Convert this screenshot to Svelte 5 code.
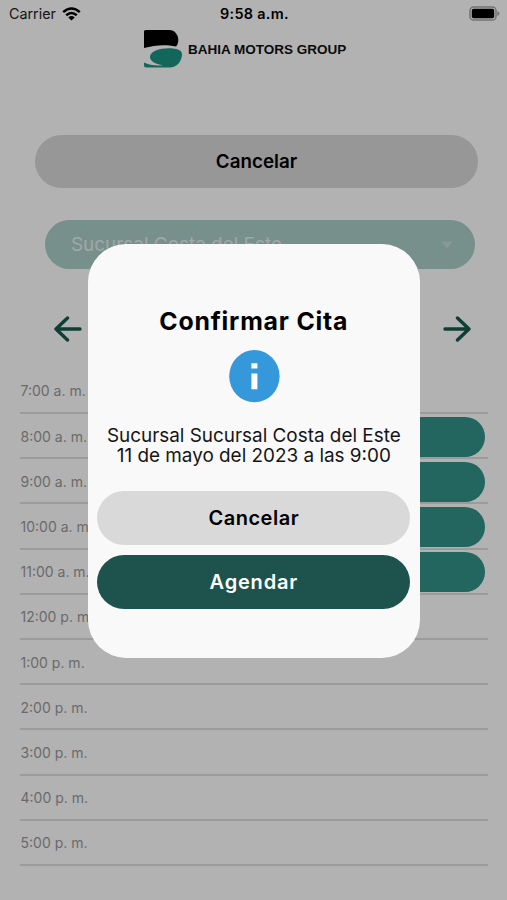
<script>
    let showModal = true;
    let branch = "Sucursal Costa del Este";

    const hours = [
        { label: "7:00 a. m.", free: false },
        { label: "8:00 a. m.", free: true },
        { label: "9:00 a. m.", free: true },
        { label: "10:00 a. m.", free: true },
        { label: "11:00 a. m.", free: true },
        { label: "12:00 p. m.", free: false },
        { label: "1:00 p. m.", free: false },
        { label: "2:00 p. m.", free: false },
        { label: "3:00 p. m.", free: false },
        { label: "4:00 p. m.", free: false },
        { label: "5:00 p. m.", free: false },
    ];
</script>

<div class="screen">
    <div class="status">
        <div class="carrier">
            <span>Carrier</span>
            <svg width="19" height="14" viewBox="0 0 19 14">
                <g fill="none" stroke="#000" stroke-width="2.5">
                    <path d="M1.2 5.1Q9.5-2.2 17.8 5.1" />
                    <path d="M4.2 8.3Q9.5 3.8 14.8 8.3" />
                </g>
                <path d="M6.3 10.4Q9.5 7.8 12.7 10.4L9.5 13.6Z" />
            </svg>
        </div>
        <span class="clock">9:58 a.m.</span>
        <svg class="battery" width="31" height="15" viewBox="0 0 31 15">
            <rect x="1" y="1" width="26" height="13" rx="3.6" fill="none" stroke="#a6a6a6" stroke-width="1.5" />
            <rect x="2.8" y="2.8" width="22.4" height="9.4" rx="1.8" />
            <path d="M28.3 5Q30.4 5.8 30.4 7.5T28.3 10Z" fill="#a6a6a6" />
        </svg>
    </div>

    <header>
        <svg width="38" height="38" viewBox="0 0 38 38">
            <path d="M1.5 0H25C31 0 34.3 5 34.3 10C34.3 13 33.5 15 32 16.5C20 14 10 15.5 0 18V1.5Q0 0 1.5 0Z" />
            <path
                fill="#1c9382"
                d="M6 27C6 21.5 15 18.2 25 18.2C33 18.2 38 20.3 38 24C38 31 33.5 37.5 25 37.5H2Q0 37.5 0 35.5V32.5C5 34.8 12 36.2 19 35.2C11 34 6 31 6 27Z"
            />
        </svg>
        <span>BAHIA MOTORS GROUP</span>
    </header>

    <button class="cancel">Cancelar</button>

    <div class="select">
        <span>{branch}</span>
        <svg width="12" height="8" viewBox="0 0 12 8"><path d="M.5.5H11.5L6 7.5Z" fill="#c4dcd7" /></svg>
    </div>

    <div class="days">
        <svg width="28" height="26" viewBox="0 0 28 26">
            <path d="M26 13H2M13.5 2L2 13L13.5 24" />
        </svg>
        <svg width="28" height="26" viewBox="0 0 28 26">
            <path d="M2 13H26M14.5 2L26 13L14.5 24" />
        </svg>
    </div>

    <div class="agenda">
        {#each hours as hour}
            <div class="row">
                <span>{hour.label}</span>
                {#if hour.free}
                    <div class="slot"></div>
                {/if}
            </div>
        {/each}
    </div>
</div>

{#if showModal}
    <div class="backdrop">
        <div class="modal">
            <h2>Confirmar Cita</h2>
            <svg class="info" width="52" height="54" viewBox="0 0 52 54">
                <ellipse cx="26.4" cy="27.2" rx="25.2" ry="26.1" fill="#3498db" />
                <path fill="#fff" d="M23.4 14.3H29.4V19.6H23.4ZM23.4 24.6H29.4V40.3H23.4Z" />
            </svg>
            <p>
                <span class="place">Sucursal {branch}</span>
                <span class="date">11 de mayo del 2023 a las 9:00</span>
            </p>
            <button class="no" on:click={() => (showModal = false)}>Cancelar</button>
            <button class="yes" on:click={() => (showModal = false)}>Agendar</button>
        </div>
    </div>
{/if}

<style>
    :global(body) {
        margin: 0;
        background: #fff;
    }
    .screen,
    .backdrop {
        font-family: Inter, "Open Sans", sans-serif;
        box-sizing: border-box;
        width: 507px;
        height: 900px;
    }
    .screen {
        overflow: hidden;
        background: #fff;
        color: #000;
    }
    svg {
        display: block;
    }
    button {
        display: block;
        padding: 0;
        border: none;
        font-family: inherit;
        color: #000;
    }
    .status {
        display: grid;
        grid-template-columns: 1fr auto 1fr;
        align-items: center;
        height: 27px;
        padding: 0 7px 0 9px;
    }
    .carrier {
        display: flex;
        align-items: center;
        gap: 6px;
        font-size: 14.3px;
        color: #222;
    }
    .clock {
        font-size: 14.4px;
        font-weight: 600;
        letter-spacing: 0.3px;
    }
    .battery {
        justify-self: end;
    }
    header {
        display: flex;
        align-items: center;
        gap: 6px;
        height: 38px;
        margin: 3px 0 0 144px;
        font: bold 13.5px "Liberation Sans", Arial, sans-serif;
        color: #111;
    }
    .cancel {
        width: 443px;
        height: 53px;
        margin: 67px 0 0 35px;
        border-radius: 27px;
        background: #d9d9d9;
        font-size: 18.8px;
        font-weight: 600;
    }
    .select {
        display: flex;
        align-items: center;
        justify-content: space-between;
        box-sizing: border-box;
        width: 430px;
        height: 49px;
        margin: 31.5px 0 0 45px;
        padding: 1px 22px 0 26px;
        border-radius: 25px;
        background: #abcfc8;
        color: #e6f0ee;
        font-size: 18.9px;
    }
    .days {
        display: flex;
        justify-content: space-between;
        margin: 47.5px 36px 0 54px;
    }
    .days path {
        fill: none;
        stroke: #175a4c;
        stroke-width: 3.4;
        stroke-linecap: round;
        stroke-linejoin: round;
    }
    .agenda {
        margin: 26.9px 19px 0 20px;
    }
    .row {
        display: flex;
        align-items: center;
        box-sizing: border-box;
        height: 45.2px;
        padding-top: 1px;
        border-bottom: 2px solid #dedede;
        color: #999;
        font-size: 14px;
    }
    .row span {
        width: 77px;
        padding-left: 0.5px;
        white-space: nowrap;
    }
    .slot {
        flex: 1;
        height: 40px;
        margin: 1px 3px 0 0;
        border-radius: 20px;
        background: #319288;
    }
    .backdrop {
        position: absolute;
        top: 0;
        left: 0;
        padding: 243.6px 0 0 87.6px;
        background: rgba(0, 0, 0, 0.3);
    }
    .modal {
        display: flex;
        flex-direction: column;
        align-items: center;
        box-sizing: border-box;
        width: 332.4px;
        height: 414px;
        padding-top: 62px;
        border-radius: 38px;
        background: #f9f9f9;
    }
    h2 {
        margin: 0;
        font-size: 24.8px;
        font-weight: 700;
        line-height: 30px;
        letter-spacing: 0.8px;
    }
    .info {
        margin-top: 13px;
    }
    p {
        display: flex;
        flex-direction: column;
        align-items: center;
        margin: 23px 0 24.4px;
        font-size: 18.9px;
        line-height: 20.5px;
        white-space: nowrap;
        color: #151515;
    }
    .modal button {
        width: 313px;
        height: 53.6px;
        border-radius: 27px;
        font-size: 20px;
        font-weight: 600;
        letter-spacing: 0.5px;
    }
    .no {
        background: #d9d9d9;
    }
    .modal .yes {
        margin-top: 10.4px;
        background: #1d534c;
        color: #fff;
        letter-spacing: 0.8px;
    }
</style>
